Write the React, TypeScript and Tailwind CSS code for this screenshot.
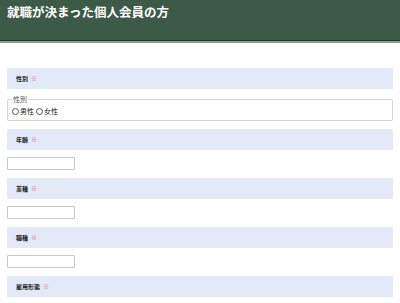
const SECTIONS = ["年齢", "業種", "職種"];

function Bar({ label }: { label: string }) {
  return (
    <div className="h-[21px] bg-[#e4e9f7] rounded-[1px] flex items-center pl-[9px] text-[6px] font-bold text-[#222]">
      {label}
      <span className="ml-[3px] text-[#e26b8a] font-normal">※</span>
    </div>
  );
}

function Radio({ label }: { label: string }) {
  return (
    <label className="flex items-center gap-[1px]">
      <span className="w-[7px] h-[7px] rounded-full border border-[#555] bg-white" />
      <span>{label}</span>
    </label>
  );
}

export default function App() {
  return (
    <div className="w-[400px] h-[303px] overflow-hidden bg-white" style={{ fontFamily: '"Noto Sans CJK JP", "Noto Sans", sans-serif' }}>
      <header className="h-[43px] bg-[#3c5a47] border-b-[2px] border-b-[#8a9a8f] shadow-[inset_0_-1px_0_#26382c]">
        <h1 className="pl-[7px] pt-[3px] text-[12.5px] leading-[18px] font-bold text-white">就職が決まった個人会員の方</h1>
      </header>
      <div className="px-[7px] pt-[25px] flex flex-col">
        <Bar label="性別" />
        <fieldset className="mt-[7px] h-[25px] border border-[#d6d6d6] rounded-[1px] px-[4px] pb-[2px] text-[7px] text-[#222]">
          <legend className="px-[1px] leading-[7px] text-[#555]">性別</legend>
          <div className="flex items-center gap-[2px] mt-[3px]">
            <Radio label="男性" />
            <Radio label="女性" />
          </div>
        </fieldset>
        {SECTIONS.map((s) => (
          <div key={s} className="flex flex-col">
            <div className="mt-[8px]">
              <Bar label={s} />
            </div>
            <input className="mt-[7px] w-[68px] h-[13px] border border-[#c8c8c8] rounded-[1px] bg-white" />
          </div>
        ))}
        <div className="mt-[8px]">
          <Bar label="雇用形態" />
        </div>
      </div>
    </div>
  );
}
